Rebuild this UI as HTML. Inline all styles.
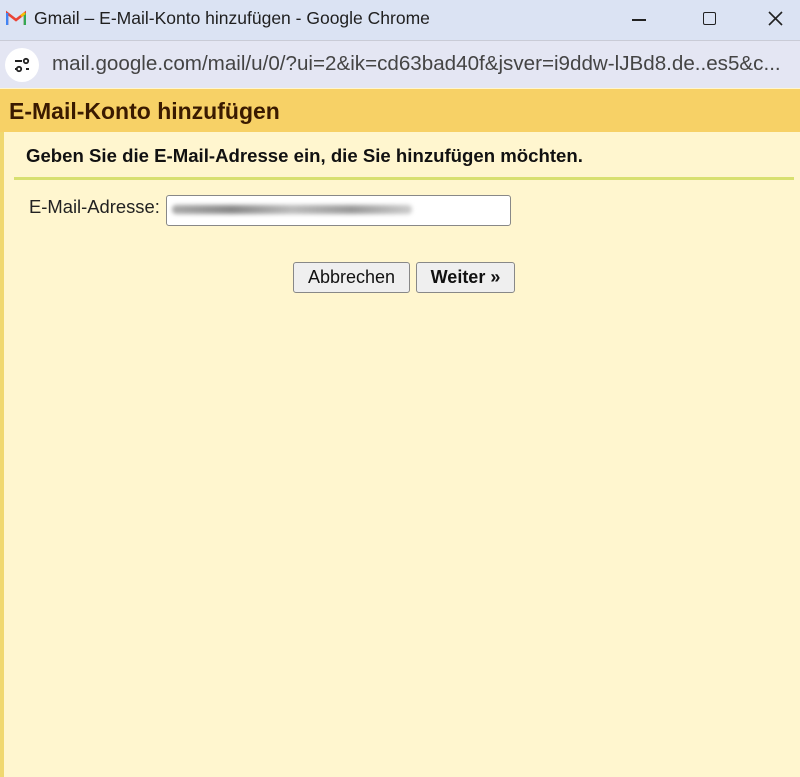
<!DOCTYPE html>
<html><head><meta charset="utf-8"><style>
*{margin:0;padding:0;box-sizing:border-box}
body{width:800px;height:777px;overflow:hidden;font-family:"Liberation Sans",Arial,sans-serif;background:#fff6cf;position:relative}
.tb{position:absolute;left:0;top:0;width:800px;height:40px;background:#dbe3f3;}
.tb .t{position:absolute;left:34px;top:8px;font-size:17.5px;color:#1f1f1f}
.ab{position:absolute;left:0;top:40px;width:800px;height:48px;background:#e4e6f3;border-top:1px solid #c9cbd6}
.ab .c{position:absolute;left:5px;top:7px;width:34px;height:34px;border-radius:50%;background:#fff}
.ab .u{position:absolute;left:52px;top:11px;font-size:20.6px;color:#444}
.hd{position:absolute;left:0;top:89px;width:800px;height:43px;background:#f7d166}
.hd h1{position:absolute;left:9px;top:9px;font-size:23px;font-weight:bold;color:#3a1a00}
.lb{position:absolute;left:0;top:132px;width:4px;height:645px;background:#f0d870}
.sub{position:absolute;left:26px;top:145px;font-size:18.6px;font-weight:bold;color:#111}
.line{position:absolute;left:14px;top:177px;width:780px;height:3px;background:#d8e070}
.lab{position:absolute;left:29px;top:196px;font-size:18.4px;color:#222}
.inp{position:absolute;left:166px;top:195px;width:345px;height:31px;background:#fff;border:1px solid #888;border-radius:3px}
.blur{position:absolute;left:5px;top:9px;width:240px;height:9px;background:linear-gradient(90deg,#aaa,#888,#bbb,#999,#ccc);filter:blur(2px);border-radius:4px}
.btn{position:absolute;top:262px;height:31px;background:#efefef;border:1px solid #888;border-radius:3px;font-size:18px;color:#111;text-align:center;line-height:29px}
</style></head><body>
<div class="tb">
<svg style="position:absolute;left:6px;top:10px" width="20" height="16" viewBox="0 0 20 16"><path d="M1 15V3l9 7 9-7v12" fill="none" stroke="#ea4335" stroke-width="2.6"/><path d="M1 15V3" stroke="#4285f4" stroke-width="2.6"/><path d="M19 15V3" stroke="#34a853" stroke-width="2.6"/><path d="M15 6l4-3" stroke="#fbbc04" stroke-width="2.6"/></svg>
<div class="t">Gmail – E-Mail-Konto hinzufügen - Google Chrome</div>
<div style="position:absolute;left:632px;top:19px;width:14px;height:1.5px;background:#222"></div>
<div style="position:absolute;left:703px;top:12px;width:13px;height:13px;border:1.5px solid #222;border-radius:2px"></div>
<svg style="position:absolute;left:768px;top:11px" width="15" height="15"><path d="M1 1L14 14M14 1L1 14" stroke="#222" stroke-width="1.6"/></svg>
</div>
<div class="ab"><div class="c">
<svg width="34" height="34"><path d="M10 13h7M21 21h3M10 21h7" stroke="#222" stroke-width="2"/><circle cx="21" cy="13" r="2.2" fill="none" stroke="#222" stroke-width="1.8"/><circle cx="14" cy="21" r="2.2" fill="#fff" stroke="#222" stroke-width="1.8"/></svg>
</div><div class="u">mail.google.com/mail/u/0/?ui=2&amp;ik=cd63bad40f&amp;jsver=i9ddw-lJBd8.de..es5&amp;c...</div></div>
<div class="hd"><h1>E-Mail-Konto hinzufügen</h1></div>
<div class="lb"></div>
<div class="sub">Geben Sie die E-Mail-Adresse ein, die Sie hinzufügen möchten.</div>
<div class="line"></div>
<div class="lab">E-Mail-Adresse:</div>
<div class="inp"><div class="blur"></div></div>
<div class="btn" style="left:293px;width:117px">Abbrechen</div>
<div class="btn" style="left:416px;width:99px;font-weight:bold">Weiter »</div>
</body></html>
